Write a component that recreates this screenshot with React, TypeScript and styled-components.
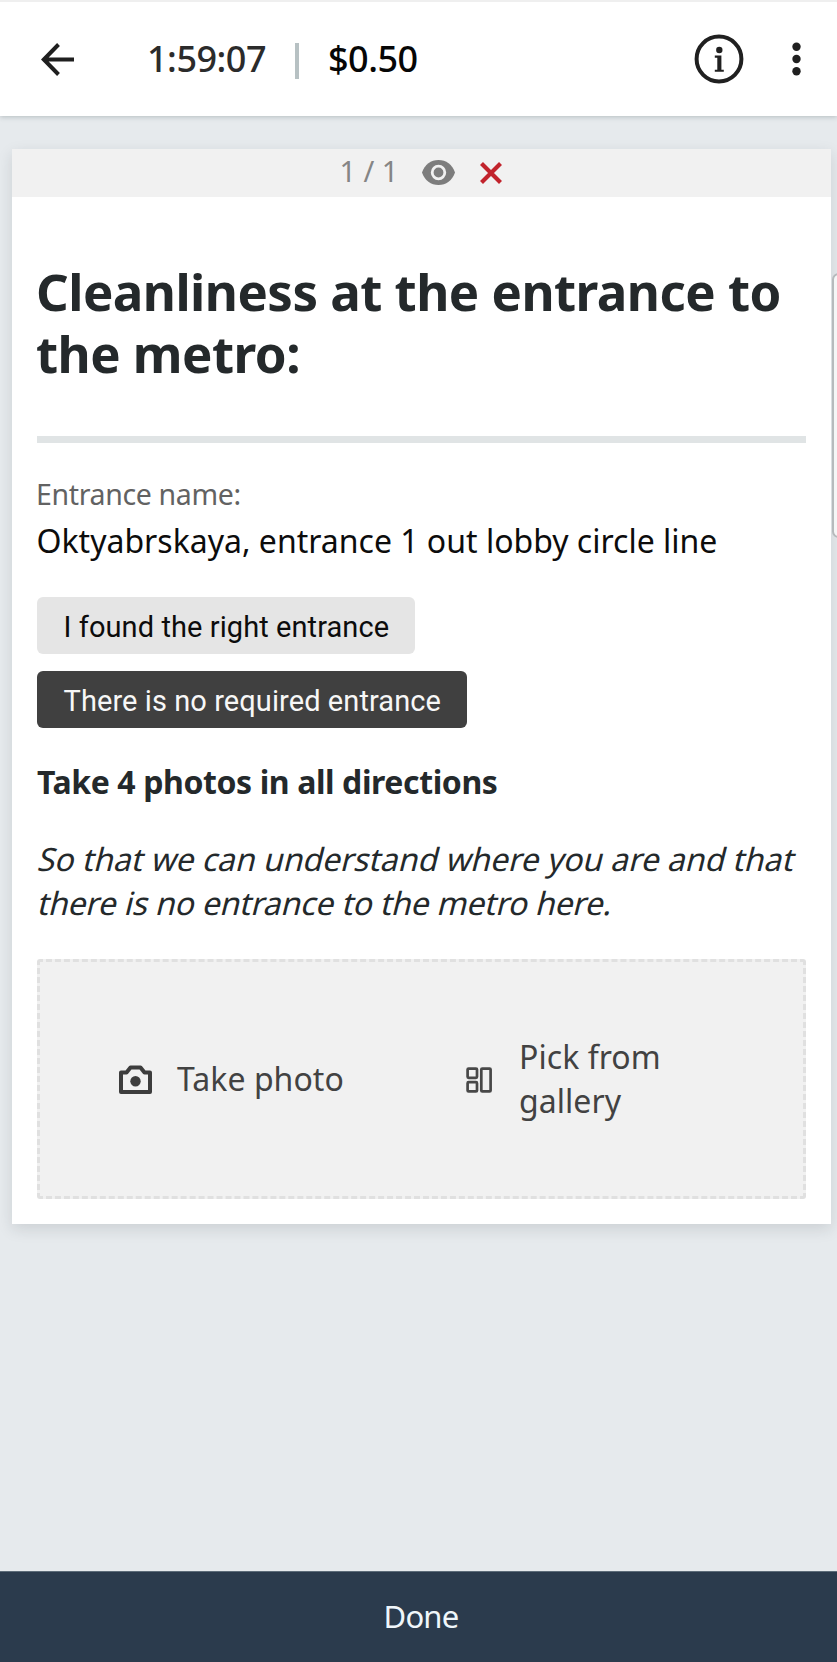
import React from "react";
import styled, { createGlobalStyle } from "styled-components";

const GlobalStyle = createGlobalStyle`
  *, *::before, *::after { box-sizing: border-box; }
  body { margin: 0; background: #e6eaed; }
  h1, h2, p { margin: 0; }
  button { border: 0; padding: 0; background: none; font: inherit; color: inherit; text-align: left; }
  svg { display: block; flex: none; }
`;

const Screen = styled.div`
  position: relative;
  display: flex;
  flex-direction: column;
  width: 837px;
  height: 1662px;
  overflow: hidden;
  background: #e6eaed;
  font-family: "Noto Sans", sans-serif;
  color: #24292b;
`;

const Header = styled.header`
  display: flex;
  align-items: center;
  flex: none;
  height: 116px;
  padding: 0 34px 0 41px;
  border-top: 2px solid #efefef;
  background: #fff;
  box-shadow: 0 1px 5px rgba(40, 55, 60, 0.25);
`;

const Timer = styled.span`
  width: 148px;
  margin-left: 73px;
  font-size: 36px;
  font-weight: 500;
  letter-spacing: -0.5px;
  line-height: 44px;
  color: #2b2b2b;
`;

const HeaderDivider = styled.span`
  width: 4px;
  height: 36px;
  margin-top: 3px;
  background: #b7c1c3;
`;

const Price = styled.span`
  margin-left: 29px;
  font-size: 36px;
  font-weight: 500;
  letter-spacing: -0.5px;
  line-height: 44px;
  color: #060606;
`;

const HeaderActions = styled.div`
  display: flex;
  align-items: center;
  gap: 46px;
  margin-left: auto;
`;

const Card = styled.main`
  flex: none;
  width: 819px;
  height: 1075.5px;
  margin: 32.5px 0 0 12px;
  background: #fff;
  box-shadow: 0 5px 14px rgba(30, 40, 45, 0.13);
`;

const PagerBar = styled.div`
  display: flex;
  align-items: center;
  height: 48.5px;
  padding-left: 327.5px;
  background: #f1f1f1;
`;

const PageCount = styled.span`
  width: 82px;
  margin-top: -3px;
  font-size: 29px;
  letter-spacing: 7.4px;
  line-height: 44px;
  color: #858585;
`;

const CloseIcon = styled.svg`
  margin-left: 25px;
`;

const CardBody = styled.div`
  padding: 63px 25px 0;
`;

const Title = styled.h1`
  margin-left: -1px;
  font-size: 51px;
  font-weight: 700;
  line-height: 62.3px;
  letter-spacing: -0.53px;
  white-space: nowrap;
`;

const Rule = styled.hr`
  height: 7px;
  margin: 51px 0 31.5px;
  border: 0;
  background: #e0e4e5;
`;

const FieldLabel = styled.p`
  margin-left: -1px;
  font-size: 28.5px;
  line-height: 40px;
  letter-spacing: -0.35px;
  color: #626262;
`;

const FieldValue = styled.p`
  margin: 4.5px 0 34px -0.5px;
  font-size: 32px;
  line-height: 44px;
  color: #0c0c0c;
`;

const Choices = styled.div`
  display: flex;
  flex-direction: column;
  align-items: flex-start;
  gap: 17px;
`;

const Choice = styled.button<{ $selected?: boolean }>`
  height: 57px;
  padding: 4px 26px 0 26.5px;
  border-radius: 6px;
  background: ${(p) => (p.$selected ? "#404040" : "#e5e5e5")};
  color: ${(p) => (p.$selected ? "#f7f7f7" : "#0c0c0c")};
  font-family: Roboto, sans-serif;
  font-size: 29px;
  letter-spacing: 0.08px;
`;

const SectionTitle = styled.h2`
  margin: 32.6px 0 32.9px;
  font-size: 32px;
  font-weight: 700;
  line-height: 44px;
  letter-spacing: -0.4px;
`;

const Hint = styled.p`
  line-height: 44.4px;
  font-size: 32px;
  white-space: nowrap;
`;

const SlantedLine = styled.span<{ $tracking: number }>`
  display: block;
  margin-left: -1px;
  letter-spacing: ${(p) => p.$tracking}px;
  transform: skewX(-14deg);
  transform-origin: 0 78%;
`;

const UploadBox = styled.section`
  display: flex;
  align-items: center;
  height: 239.5px;
  margin-top: 33.5px;
  padding-left: 79px;
  border: 3px dashed #e0e0e0;
  border-radius: 3px;
  background: #f1f1f1;
`;

const UploadOption = styled.button<{ $width: number; $gap: number }>`
  display: flex;
  align-items: center;
  gap: ${(p) => p.$gap}px;
  width: ${(p) => p.$width}px;
  padding-top: 1px;
  font-size: 32px;
  line-height: 43.7px;
  letter-spacing: 0.05px;
  color: #424242;
`;

const OptionLabel = styled.span`
  margin-top: -1px;
`;

const DoneBar = styled.button`
  flex: none;
  height: 91px;
  margin-top: auto;
  padding: 0 0 2px 5px;
  border-top: 1px solid #5d6c79;
  background: #2b3b4d;
  color: #eff6fa;
  font-size: 31px;
  letter-spacing: -0.8px;
  text-align: center;
`;

const ScrollThumb = styled.div`
  position: absolute;
  top: 273px;
  right: -8px;
  width: 13px;
  height: 265px;
  border: 2px solid #b6babc;
  border-radius: 8px;
  background: #f5f6f6;
`;

const BackArrow = () => (
  <svg width="33" height="33" viewBox="0 0 33 33" fill="none" stroke="#1f1f1f" strokeWidth="4">
    <path d="M17.5 1.5 2.8 16.5 17.5 31.5M3 16.5H33" />
  </svg>
);

const InfoIcon = () => (
  <svg width="50" height="50" viewBox="0 0 50 50">
    <circle cx="25" cy="25" r="22.4" fill="none" stroke="#202020" strokeWidth="4" />
    <circle cx="25.3" cy="16" r="3.2" fill="#202020" />
    <path d="M20.8 21.500h6.600v14.200h2.400v2.100h-9v-2.100h2.500V23.800h-2.500z" fill="#202020" />
  </svg>
);

const MoreIcon = () => (
  <svg width="13" height="34" viewBox="0 0 13 34" fill="#202020">
    <circle cx="6.5" cy="4.7" r="4.2" />
    <circle cx="6.5" cy="17" r="4.2" />
    <circle cx="6.5" cy="29.3" r="4.2" />
  </svg>
);

const EyeIcon = () => (
  <svg width="33" height="25" viewBox="0 0 33 25">
    <path d="M16.5 0C9 0 2.600 4.500 0 12.500 2.600 20.500 9 25 16.500 25S30.400 20.500 33 12.500C30.400 4.500 24 0 16.500 0z" fill="#7d7d7d" />
    <circle cx="16.500" cy="12.500" r="6.300" fill="#7d7d7d" stroke="#f1f1f1" strokeWidth="2.800" />
  </svg>
);

const CameraIcon = () => (
  <svg width="33" height="30" viewBox="0 0 33 30" fill="none" stroke="#3d3d3d" strokeWidth="4" strokeLinejoin="round">
    <path d="M2 7.500h5.500l4-5h10l4 5H31v19.500H2z" />
    <circle cx="16.500" cy="16.200" r="5.200" fill="#3d3d3d" stroke="none" />
  </svg>
);

const GalleryIcon = () => (
  <svg width="26" height="26" viewBox="0 0 26 26" fill="none" stroke="#484848" strokeWidth="2.700">
    <rect x="1.600" y="1.600" width="9.400" height="9.200" rx="1" />
    <rect x="1.600" y="15.200" width="9.400" height="9.200" rx="1" />
    <rect x="15.300" y="1.600" width="9.300" height="22.800" rx="1" />
  </svg>
);

export default function App() {
  return (
    <Screen>
      <GlobalStyle />
      <Header>
        <button aria-label="Back">
          <BackArrow />
        </button>
        <Timer>1:59:07</Timer>
        <HeaderDivider />
        <Price>$0.50</Price>
        <HeaderActions>
          <button aria-label="Information">
            <InfoIcon />
          </button>
          <button aria-label="More">
            <MoreIcon />
          </button>
        </HeaderActions>
      </Header>

      <Card>
        <PagerBar>
          <PageCount>1/1</PageCount>
          <EyeIcon />
          <CloseIcon width="22" height="22" viewBox="0 0 22 22" stroke="#c1232c" strokeWidth="4.200">
            <path d="M1.500 1.500 20.500 20.500M20.500 1.500 1.500 20.500" />
          </CloseIcon>
        </PagerBar>

        <CardBody>
          <Title>
            Cleanliness at the entrance to
            <br />
            the metro:
          </Title>
          <Rule />
          <FieldLabel>Entrance name:</FieldLabel>
          <FieldValue>Oktyabrskaya, entrance 1 out lobby circle line</FieldValue>
          <Choices>
            <Choice>I found the right entrance</Choice>
            <Choice $selected>There is no required entrance</Choice>
          </Choices>
          <SectionTitle>Take 4 photos in all directions</SectionTitle>
          <Hint>
            <SlantedLine $tracking={-0.07}>So that we can understand where you are and that</SlantedLine>
            <SlantedLine $tracking={-0.22}>there is no entrance to the metro here.</SlantedLine>
          </Hint>
          <UploadBox>
            <UploadOption $width={347} $gap={25}>
              <CameraIcon />
              <OptionLabel>Take photo</OptionLabel>
            </UploadOption>
            <UploadOption $width={230} $gap={27}>
              <GalleryIcon />
              <OptionLabel>
                Pick from
                <br />
                gallery
              </OptionLabel>
            </UploadOption>
          </UploadBox>
        </CardBody>
      </Card>

      <DoneBar>Done</DoneBar>
      <ScrollThumb />
    </Screen>
  );
}
